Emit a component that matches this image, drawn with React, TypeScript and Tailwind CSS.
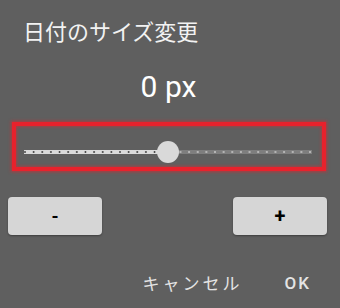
import React from "react";

const TICKS = Array.from({ length: 34 }, (_, i) => 9 + i * (285 / 33));

function Slider() {
  const thumbX = 152;
  return (
    <svg width="306" height="40" viewBox="0 0 306 40" className="block">
      <rect x="8" y="23" width={thumbX - 8} height="4" fill="#dadada" />
      <rect x={thumbX} y="23" width={296 - thumbX} height="4" fill="#7e7e7e" />
      {TICKS.map((x, i) =>
        x < thumbX ? (
          <g key={i} fill="#4a4a4a">
            <rect x={x - 1} y="24.5" width="2" height="1" />
            <rect x={x - 0.5} y="24" width="1" height="2" />
          </g>
        ) : (
          <rect key={i} x={x - 1} y="24" width="2" height="2" fill="#b4b4b4" />
        )
      )}
      <circle cx={thumbX} cy="25" r="11" fill="#d9d9d9" />
    </svg>
  );
}

export default function App() {
  return (
    <div className="w-[340px] h-[308px] bg-[#5f5f5f] flex flex-col overflow-hidden">
      <div className="pl-[23px] pt-[16px] text-[22px] leading-[28px] text-[#f2f2f2] font-['Noto_Sans_CJK_JP',sans-serif]">
        日付のサイズ変更
      </div>

      <div className="mt-[26px] pr-[3px] text-center text-[30px] leading-[34px] text-white font-['Roboto',sans-serif]">
        0 px
      </div>

      <div className="mt-[18px] ml-[12px] w-[314px] h-[49px] border-4 border-[#e8222c] shadow-[0_0_3px_1px_rgba(232,34,44,0.6),inset_0_0_3px_1px_rgba(232,34,44,0.5)] pt-[1px]">
        <Slider />
      </div>

      <div className="mt-[26px] flex justify-between ml-[8px] mr-[13px] font-['Roboto',sans-serif]">
        <button
          type="button"
          className="w-[94px] h-[38px] rounded-[4px] bg-[#d6d6d6] shadow-[0_1px_2px_rgba(0,0,0,0.35)] text-black text-[18px] font-bold"
        >
          -
        </button>
        <button
          type="button"
          className="w-[94px] h-[38px] rounded-[4px] bg-[#d6d6d6] shadow-[0_1px_2px_rgba(0,0,0,0.35)] text-black text-[20px] font-bold"
        >
          +
        </button>
      </div>

      <div className="mt-[36px] flex justify-end items-center gap-[42px] pr-[29px] text-[#e4e4e4]">
        <span className="text-[17px] leading-[24px] tracking-[3px] font-['Noto_Sans_CJK_JP',sans-serif]">
          キャンセル
        </span>
        <span className="text-[17px] leading-[24px] tracking-[2px] font-medium font-['Roboto',sans-serif]">
          OK
        </span>
      </div>
    </div>
  );
}
